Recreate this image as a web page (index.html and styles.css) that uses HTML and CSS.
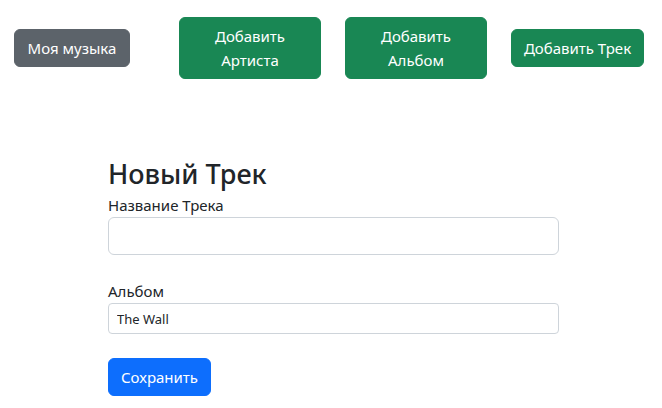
FILE: index.html
```html
<!DOCTYPE html>
<html lang="ru">
<head>
<meta charset="utf-8">
<title>Новый Трек</title>
<link rel="stylesheet" href="styles.css">
</head>
<body>
<nav class="topbar">
  <a class="btn btn-gray btn-music">Моя музыка</a>
  <a class="btn btn-green btn-wide btn-artist">Добавить Артиста</a>
  <a class="btn btn-green btn-wide btn-album">Добавить Альбом</a>
  <a class="btn btn-green btn-track">Добавить Трек</a>
</nav>
<main class="form-wrap">
  <h2 class="title">Новый Трек</h2>
  <div class="group">
    <label class="label">Название Трека</label>
    <input class="input" type="text">
  </div>
  <div class="group">
    <label class="label">Альбом</label>
    <input class="input input-sm" type="text" value="The Wall">
  </div>
  <button class="btn btn-blue">Сохранить</button>
</main>
</body>
</html>
```
FILE: styles.css
```css
* { box-sizing: border-box; }
body {
  margin: 0;
  font-family: "Noto Sans", "Open Sans", sans-serif;
  font-size: 16px;
  line-height: 1.5;
  color: #212529;
  background: #fff;
}
.topbar {
  display: flex;
  align-items: center;
  padding-top: 17px;
  padding-left: 14px;
}
.btn {
  display: inline-block;
  padding: 6px 12px;
  border: 1px solid transparent;
  border-radius: 6px;
  font-family: inherit;
  font-size: 15px;
  line-height: 24px;
  text-align: center;
  color: #fff;
  cursor: pointer;
}
.btn-gray { background: #5c636a; border-color: #5c636a; }
.btn-green { background: #198754; border-color: #198754; }
.btn-blue { background: #0d6efd; border-color: #0d6efd; }
.btn-music { width: 116px; }
.btn-wide { width: 142px; }
.btn-artist { margin-left: 49px; }
.btn-album { margin-left: 24px; }
.btn-track {
  margin-left: 24px;
  width: 133px;
  padding-left: 4px;
  padding-right: 4px;
  white-space: nowrap;
}
.form-wrap {
  margin-left: 108px;
  width: 451px;
  padding-top: 79px;
}
.title {
  margin: 0 0 3px;
  font-size: 27px;
  font-weight: 500;
  line-height: 1.2;
}
.group { margin-bottom: 24px; }
.label {
  display: block;
  font-size: 15px;
  line-height: 24px;
}
.input {
  display: block;
  width: 100%;
  height: 38px;
  padding: 6px 12px;
  border: 1px solid #ced4da;
  border-radius: 6px;
  font-family: inherit;
  font-size: 15px;
  color: #212529;
  background: #fff;
}
.input-sm {
  height: 31px;
  padding: 4px 8px;
  font-size: 13px;
  border-radius: 4px;
}
```
